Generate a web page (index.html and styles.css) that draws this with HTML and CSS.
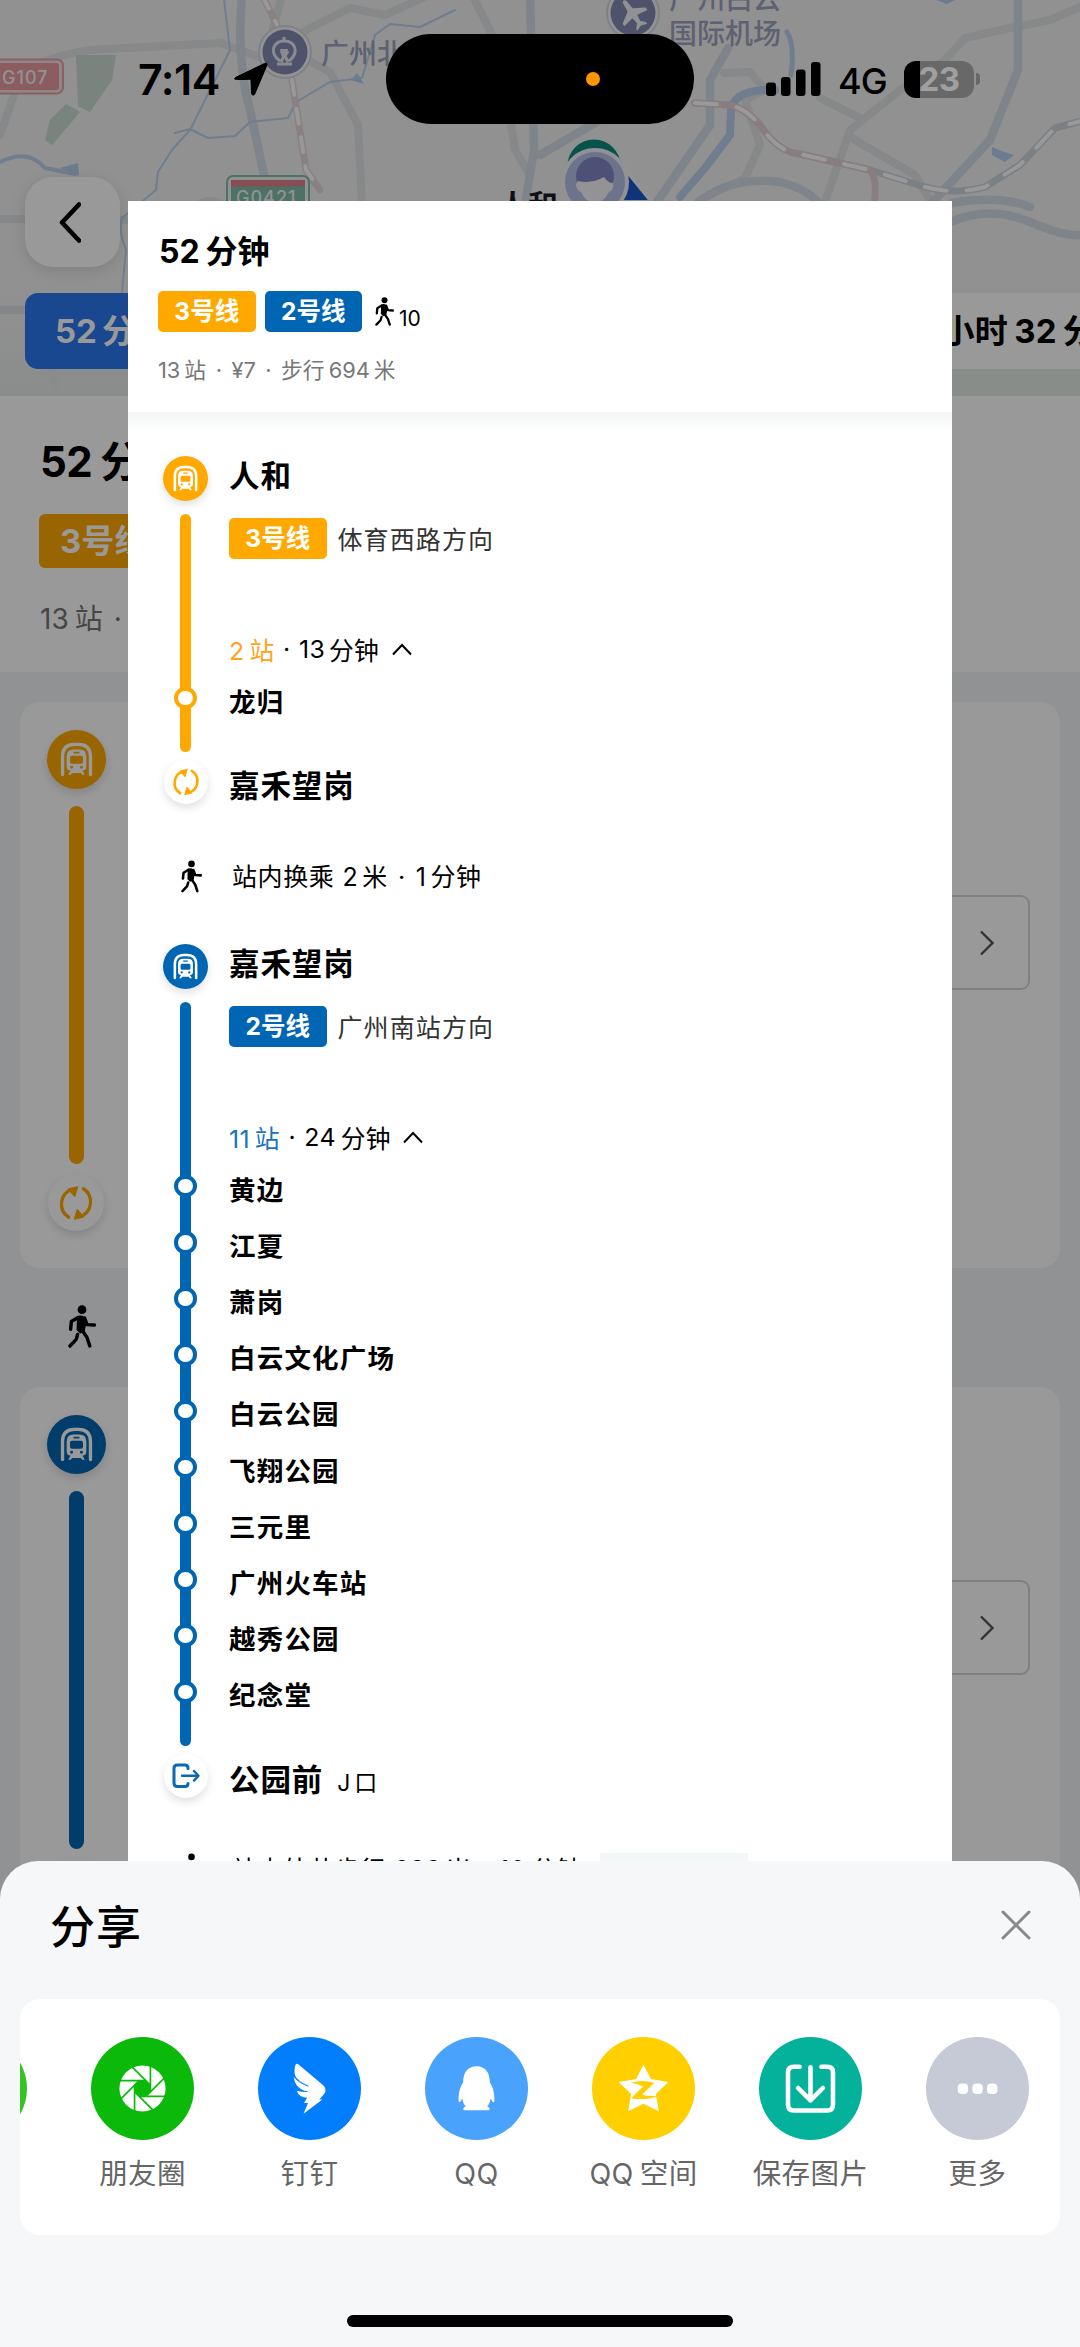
FILE: index.html
```html
<!DOCTYPE html>
<html lang="zh-CN">
<head>
<meta charset="utf-8">
<title>分享路线</title>
<link rel="stylesheet" href="styles.css">
</head>
<body>
<svg class="defs" aria-hidden="true">
  <symbol id="metro" viewBox="0 0 60 60">
    <path d="M15.8 45.3V27Q15.8 14.6 28 14.6H32Q44.2 14.6 44.2 27V45.3" fill="none" stroke="#fff" stroke-width="3.4" stroke-linecap="round"/>
    <path fill="#fff" fill-rule="evenodd" d="M27 19.8H33Q40 19.8 40 27V37Q40 41.2 36 41.2L38.4 45.6H35.6L34.6 43.8H25.4L24.4 45.6H21.6L24 41.2Q20 41.2 20 37V27Q20 19.8 27 19.8ZM27 22V23.8H33V22ZM25.4 26.2Q23.4 26.2 23.4 28.2V32.4Q23.4 34.4 25.4 34.4H34.6Q36.6 34.4 36.6 32.4V28.2Q36.6 26.2 34.6 26.2ZM25 36.4A1.5 1.5 0 1 0 25 39.4A1.5 1.5 0 1 0 25 36.4ZM35 36.4A1.5 1.5 0 1 0 35 39.4A1.5 1.5 0 1 0 35 36.4Z"/>
  </symbol>
  <symbol id="swap" viewBox="-22 -22 44 44">
    <g id="swap-half"><path d="M-5.8 11.2A12.3 12.3 0 0 1 -3 -10.8" fill="none" stroke="#ffa800" stroke-width="2.6" stroke-linecap="round"/><path d="M1.2-12.6L-6-11L-1-5.2Z" fill="#ffa800" stroke="#ffa800" stroke-linejoin="round"/></g>
    <use href="#swap-half" transform="rotate(180)"/>
  </symbol>
  <symbol id="walk" viewBox="0 0 28 43">
    <circle cx="14" cy="4.7" r="4.4"/>
    <path d="M9 11.2Q13 9.6 17 12L18 20L16.6 27L12 28.5L8.6 25Z"/>
    <g fill="none" stroke="#000" stroke-width="3.4" stroke-linecap="round" stroke-linejoin="round">
      <path d="M10 12.5L3.4 16.5L2.6 24.2"/><path d="M16.6 13L19 19.6L26.4 20"/><path d="M14.6 26L19 32.5L21.8 41"/><path d="M9.6 29.5L8.2 34.4L2 41"/>
    </g>
  </symbol>
  <symbol id="caret" viewBox="0 0 20 13"><path d="M1 11.5L10 2L19 11.5" fill="none" stroke="#000" stroke-width="2"/></symbol>
</svg>

<div class="screen">
  <div class="page">
    <div class="map">
      <svg class="map-art" width="1080" height="396" viewBox="0 0 1080 396">
        <defs><linearGradient id="fade" x1="0" y1="0" x2="0" y2="1"><stop offset="0" stop-color="#eeefef" stop-opacity="0"/><stop offset="1" stop-color="#e7e9ea"/></linearGradient></defs>
        <rect width="1080" height="396" fill="#f2f2f2"/>
        <g fill="none" stroke-linejoin="round" stroke-linecap="round">
          <g stroke="#dfe3e4" stroke-width="8">
            <path d="M-5 95Q30 58 90 50L220 43L262 58L310 28L350 8L385 15L440-10"/>
            <path d="M14 95L0 135"/><path d="M282-5L270 40L330 72L358 125L362 205"/><path d="M0 219L125 220" /><path d="M472-5L500 50L515 150L530 175"/>
            <path d="M724 73L750 72L765 90L745 100L760 145L745 178L700 200L670 235"/>
            <path d="M825 202L850 130L900 90L945 60L965 38L1010 28L1050 20L1085 5"/>
            <path d="M820 98L860 118M850 137L915 175L930 200"/><path d="M190 215Q205 190 230 210"/>
          </g>
          <g stroke="#d3dce4" stroke-width="8.500">
            <path d="M242-5Q236 60 250 110L265 180"/><path d="M728 48L710 80L710 125L655 205"/><path d="M530-5L534 150L525 205"/>
            <path d="M1018-5L1018 70L990 140L930 205M695 205Q730 175 780 182Q810 190 820 205"/><path d="M950 222Q990 205 1030 222T1085 234" /><path d="M952 203Q1000 195 1030 207"/><path d="M0 310H25M50 365L60 396M540 155L600 120"/>
          </g>
          <g stroke="#bad1ee">
            <path stroke-width="4" d="M0 162Q28 148 45 168L75 174"/><path stroke-width="2" d="M224 0L230 50L190 130L172 150L158 172L156 190L144 200L122 218Q118 230 126 250L122 292M175 133L190 129L208 138L235 136L250 122L288 118L296 102L330 82L362 78L375 35L390 24L420 27L455 10"/>
            <path stroke-width="8" d="M775 90Q735 88 731 110L730 135L705 168L680 197"/><path stroke-width="5" d="M787 32Q795 45 791 75"/>
          </g>
          <path d="M262-5L277 25M292 80L306 170L320 190" stroke="#e4d6d9" stroke-width="7"/><path d="M262-5L277 25M292 80L306 170L320 190" stroke="#fff" stroke-width="4" stroke-dasharray="15 14"/>
          <path d="M695 103L730 105Q750 110 765 132Q780 152 800 154L870 170L925 187Q955 195 985 187L1020 165L1055 128L1085 120" stroke="#ccd5dd" stroke-width="7"/>
          <path d="M695 103L730 105Q750 110 765 132Q780 152 800 154L870 170Q878 180 874 205" stroke="#e5d2d4" stroke-width="7"/>
          <path d="M695 103L730 105Q750 110 765 132Q780 152 800 154L870 170L925 187Q955 195 985 187L1020 165L1055 128L1085 120" stroke="#fff" stroke-width="4" stroke-dasharray="22 20"/>
        </g>
        <path d="M76 55L116 55L112 80L90 112L78 106Z M66 104L80 112L58 138L52 145L45 140L50 120Z" fill="#c9dcd1"/>
        <path d="M60 168L78 163L79 176Z M357 73L364 84L350 80Z M992 147L1004 152L1014 155L1005 162L992 155Z M936 0H955L947 4Z" fill="#b2cdf0"/>
        <rect x="0" y="270" width="1080" height="126" fill="url(#fade)"/><rect x="952" y="360" width="128" height="36" fill="#e3ebe6"/>
        <rect x="-10" y="59.500" width="73" height="34" rx="6" fill="#f2dfe0" stroke="#e5a2a8" stroke-width="2"/><rect x="-10" y="63" width="69" height="27" rx="3" fill="#e89aa1"/>
        <text class="road" x="2" y="84" font-size="18">G107</text>
        <rect x="227" y="176" width="82" height="40" rx="6" fill="#eef3f1" stroke="#7fbdaa" stroke-width="2"/><rect x="231" y="180" width="74" height="34" fill="#7fbdaa"/><rect x="231" y="180" width="74" height="6.500" fill="#df8289"/>
        <text class="road" x="236" y="204" font-size="18">G0421</text>
        <circle cx="285" cy="52" r="26" fill="#f5f5f5" stroke="#d5d8de" stroke-width="2"/><circle cx="285" cy="52" r="22.500" fill="#828bb3"/>
        <path d="M280 61C268 52 274 41 284 41C295 41 300 52 289 61M284 37V41M277 64H292M281 51L284 56L281 62M288 51L285 56L288 62" fill="none" stroke="#e6e8f2" stroke-width="3"/><path d="M280 49H288L286 57H282Z" fill="#e6e8f2"/>
        <circle cx="633" cy="13" r="26" fill="#f5f5f5" stroke="#d5d8de" stroke-width="2"/><circle cx="633" cy="13" r="22.500" fill="#828bb3"/>
        <path transform="translate(633 14) rotate(-35)" d="M-2-15Q0-18 2-15L3-5L14 2V5L3 3L2 10L6 14V16L0 14L-6 16V14L-2 10L-3 3L-14 5V2L-3-5Z" fill="#f2f3f8"/>
        <text class="place" x="321" y="64" font-size="28">广州北</text>
        <text class="place" x="669" y="9" font-size="28">广州白云</text><text class="place" x="669" y="44" font-size="28">国际机场</text>
        <text class="stop-label" x="498" y="216" font-size="30">人和</text>
        <path d="M622 165L652 202H600Z" fill="#1c57c8" stroke="#f2f4fa" stroke-width="4"/>
        <circle cx="594" cy="166" r="28" fill="#0d897d" stroke="#e8f4f0" stroke-width="3"/>
        <circle cx="595" cy="182" r="32" fill="#b6c0e6" stroke="#f2f4fa" stroke-width="4"/><circle cx="595" cy="176" r="19" fill="#8088c4"/>
        <path d="M578 181Q592 184 604 177Q608 183 613 183Q614 190 609 192Q603 203 595 203Q586 203 581 192Q576 190 576 184Z" fill="#f5f6fb"/>
      </svg>
      <div class="back"><svg width="22" height="41" viewBox="0 0 22 41"><path d="M20 2.500L3 20.500L20 38.500" fill="none" stroke="#000" stroke-width="4.600" stroke-linecap="round" stroke-linejoin="round"/></svg></div>
      <div class="chips"><div class="chip active">52<span class="g5">分钟</span></div><div class="chip other">1小时<span class="g6">32</span><span class="g6">分钟</span></div></div>
    </div>
    <div class="summary">
      <div class="summary-title">52<span class="g8">分钟</span></div>
      <div class="summary-tag">3号线</div>
      <div class="summary-info">13<span class="g6">站</span><span class="dot">·</span></div>
    </div>
    <div class="card leg-card">
      <div class="bg-rail"><div class="bg-badge orange"><svg><use href="#metro"/></svg></div><div class="bg-line orange"></div><div class="bg-badge plain"><svg><use href="#swap"/></svg></div></div>
      <div class="go"><svg width="14" height="26" viewBox="0 0 14 26"><path d="M1 1.500L12.500 13L1 24.500" fill="none" stroke="#585858" stroke-width="2.400"/></svg></div>
    </div>
    <div class="bg-walk"><svg width="28" height="43"><use href="#walk"/></svg></div>
    <div class="card leg-card">
      <div class="bg-rail"><div class="bg-badge blue"><svg><use href="#metro"/></svg></div><div class="bg-line blue long"></div><div class="bg-badge plain"></div></div>
      <div class="go"><svg width="14" height="26" viewBox="0 0 14 26"><path d="M1 1.500L12.500 13L1 24.500" fill="none" stroke="#585858" stroke-width="2.400"/></svg></div>
    </div>
  </div>

  <div class="scrim"></div>

  <div class="status">
    <div class="clock">7:14</div>
    <svg class="loc" width="34" height="34" viewBox="0 0 34 34"><path d="M1.500 15.500L31.500 1Q33.500 .5 33 3L20.500 32.500Q18.500 34.500 17.500 31.500L17 18.500Q16.800 17.500 15.500 17.300L2.500 17.500Q-1 17.300 1.500 15.500Z" stroke="#000" stroke-linejoin="round"/></svg>
    <div class="island"><i></i></div>
    <svg class="signal" width="55" height="34" viewBox="0 0 55 34"><rect y="20.500" width="10" height="13.500" rx="3"/><rect x="15" y="15" width="9.500" height="19" rx="3"/><rect x="30" y="7.500" width="9.500" height="26.500" rx="3"/><rect x="45" width="9.500" height="34" rx="3"/></svg>
    <div class="net">4G</div>
    <div class="battery"><span>23</span></div><div class="nub"></div>
  </div>

  <div class="poster">
    <div class="head">
      <div class="head-title">52<span class="g6">分钟</span></div>
      <div class="tags"><span class="tag orange">3号线</span><span class="tag blue">2号线</span><svg class="walk-mini" width="19" height="29"><use href="#walk"/></svg><span class="walk-min">10</span></div>
      <div class="head-info">13<span class="g4">站</span><span class="dot">·</span>¥7<span class="dot">·</span>步行<span class="g4">694</span><span class="g4">米</span></div>
    </div>
    <div class="legs">
      <div class="leg">
        <div class="rail"><div class="badge orange"><svg><use href="#metro"/></svg></div><div class="line orange"><i></i></div><div class="badge plain"><svg><use href="#swap"/></svg></div></div>
        <div class="detail">
          <div class="station">人和</div>
          <div class="toward"><span class="tag orange">3号线</span><span class="dir">体育西路方向</span></div>
          <div class="stat"><b class="c-orange">2<span class="g5">站</span></b><em>·</em>13<span class="g4">分钟</span><svg width="20" height="13"><use href="#caret"/></svg></div>
          <div class="stops"><div>龙归</div></div>
          <div class="station">嘉禾望岗</div>
        </div>
      </div>
      <div class="walk"><svg width="21" height="33"><use href="#walk"/></svg><div>站内换乘<span class="g9">2</span><span class="g4">米</span><em>·</em>1<span class="g4">分钟</span></div></div>
      <div class="leg">
        <div class="rail"><div class="badge blue"><svg><use href="#metro"/></svg></div><div class="line blue long"><i></i><i></i><i></i><i></i><i></i><i></i><i></i><i></i><i></i><i></i></div><div class="badge plain"><svg viewBox="-22 -22 44 44"><g fill="none" stroke="#0a68b4" stroke-width="3" stroke-linecap="round" stroke-linejoin="round"><path d="M2-7.500V-8Q2-11-1-11H-8.500Q-12-11-12-8V7Q-12 10.500-8.500 10.500H-1Q2 10.500 2 7.500"/><path d="M-4-.2H12M8-5L12.500-.2L8 4.600" stroke-width="2.400"/></g></svg></div></div>
        <div class="detail">
          <div class="station">嘉禾望岗</div>
          <div class="toward"><span class="tag blue">2号线</span><span class="dir">广州南站方向</span></div>
          <div class="stat"><b class="c-blue">11<span class="g5">站</span></b><em>·</em>24<span class="g5">分钟</span><svg width="20" height="13"><use href="#caret"/></svg></div>
          <div class="stops"><div>黄边</div><div>江夏</div><div>萧岗</div><div>白云文化广场</div><div>白云公园</div><div>飞翔公园</div><div>三元里</div><div>广州火车站</div><div>越秀公园</div><div>纪念堂</div></div>
          <div class="station">公园前<span class="exit">J<span>口</span></span></div>
        </div>
      </div>
      <div class="walk last"><svg width="21" height="33"><use href="#walk"/></svg><div>站内外共步行<span class="g9">692</span><span class="g4">米</span><em>·</em>10<span class="g5">分钟</span></div><div class="hint">预计提前到达</div></div>
    </div>
  </div>

  <div class="sheet">
    <div class="sheet-head"><h1>分享</h1><svg width="30" height="30" viewBox="0 0 30 30"><path d="M2 2L28 28M28 2L2 28" stroke="#87888a" stroke-width="3" stroke-linecap="round"/></svg></div>
    <div class="apps">
      <div class="app"><div class="ico wechat"></div></div>
      <div class="app"><div class="ico moments"><svg viewBox="-52 -52 104 104"><circle r="23.300" fill="#fff"/><path fill="#0bb90a" d="M-3.200-7.700H3.200L7.700-3.200V3.200L3.200 7.700H-3.200L-7.700 3.200V-3.200Z"/><g stroke="#0bb90a" stroke-width="1.700"><path id="bl" d="M8-24V3.500"/><use href="#bl" transform="rotate(45)"/><use href="#bl" transform="rotate(90)"/><use href="#bl" transform="rotate(135)"/><use href="#bl" transform="rotate(180)"/><use href="#bl" transform="rotate(225)"/><use href="#bl" transform="rotate(270)"/><use href="#bl" transform="rotate(315)"/></g></svg></div><span>朋友圈</span></div>
      <div class="app"><div class="ico ding"><svg viewBox="-52 -52 104 104"><path fill="#fff" d="M-13.500-25Q-11.500-25-9-22.500L13.500-3.500Q17.500 0 15.500 4.500L10 11H13L-6 25.500L-1.500 14.700H-5.500L-2.500 9.300Q-10.500 9-12.800 2.200L-4 3Q-15-1-16-11.500Q-9-3.500-1-2.500Q-14-7-15-15Q-15.500-22-13.500-25Z"/><path d="M-15-11.800Q-9-5-1-2.200M-13 1.600Q-7 3.600-2 3" fill="none" stroke="#027efc"/></svg></div><span>钉钉</span></div>
      <div class="app"><div class="ico qq"><svg viewBox="-52 -52 104 104"><path fill="#fff" d="M0-22.500C9-22.500 13.500-16 13.500-6C17-1 18.500 6 18 13.500C17 15 15.500 12 14.200 10C14 13.500 12.500 16.500 10.500 18.300C14 19 14 22 12 22H-12C-14 22-14 19-10.500 18.300C-12.500 16.500-14 13.500-14.200 10C-15.500 12-17 15-18 13.500C-18.500 6-17-1-13.500-6C-13.500-16-9-22.500 0-22.500Z"/></svg></div><span>QQ</span></div>
      <div class="app"><div class="ico qzone"><svg viewBox="-52 -52 104 104"><path fill="#fff" d="M0-24L7.500-9.500L25-6.500L12.500 5.500L15.500 23L0 15.500L-15.500 23L-12.500 5.500L-25-6.500L-7.500-9.500Z"/><path fill="#ffcf00" d="M-13-6Q0-9.500 11-5.500L-1.500 6Q6 8.500 15 7.200Q3 12.500-12.500 9.800L-.5-2Q-7-5-13-6Z"/></svg></div><span>QQ<span class="g7">空间</span></span></div>
      <div class="app"><div class="ico save"><svg viewBox="-52 -52 104 104"><g fill="none" stroke="#fff" stroke-width="4.600" stroke-linecap="round" stroke-linejoin="round"><path d="M-11-22H-17Q-22.700-22-22.700-16.500V16.500Q-22.700 22.200-17 22.200H17Q22.700 22.200 22.700 16.500V-16.500Q22.700-22 17-22H11M0-21.500V12M-12.500-.5L0 12L12.500-.5"/></g></svg></div><span>保存图片</span></div>
      <div class="app"><div class="ico more"><svg viewBox="-52 -52 104 104" fill="#fff"><rect x="-20" y="-5" width="10.500" height="10.500" rx="4"/><rect x="-5.200" y="-5" width="10.500" height="10.500" rx="4"/><rect x="9.600" y="-5" width="10.500" height="10.500" rx="4"/></svg></div><span>更多</span></div>
    </div>
    <div class="home"></div>
  </div>
</div>
</body>
</html>
```
FILE: styles.css
```css
* { box-sizing: border-box; }
body { margin: 0; font-family: Inter, "Noto Sans CJK SC", sans-serif; color: #000; }
i, em, b { font-style: normal; font-weight: inherit; }
svg { display: block; flex: none; }
.defs { position: absolute; width: 0; height: 0; }
.screen { position: relative; width: 1080px; height: 2347px; overflow: hidden; background: #f1f3f5; white-space: nowrap; }
.orange { background: #ffa800; }
.blue { background: #0066b3; }
.g4 { margin-left: 4px; } .g5 { margin-left: 5px; } .g6 { margin-left: 6px; } .g7 { margin-left: 6px; } .g8 { margin-left: 8px; } .g9 { margin-left: 8px; }

/* page behind the scrim */
.map { position: relative; height: 396px; padding: 177px 0 0 25px; overflow: hidden; }
.map-art { position: absolute; left: 0; top: 0; }
.map-art text { font-family: Inter, "Noto Sans CJK SC", sans-serif; }
.road { fill: #f3f3f3; font-weight: 500; letter-spacing: 1px; }
.place { fill: #9ba2bd; font-weight: 500; }
.stop-label { fill: #1a1c24; font-weight: 700; }
.back { position: relative; width: 95px; height: 90px; border-radius: 28px; background: #fff; box-shadow: 0 4px 16px rgba(0,0,0,.12); display: flex; align-items: center; justify-content: center; padding-right: 5px; }
.chips { position: relative; display: flex; justify-content: space-between; margin-top: 26px; width: 1190px; }
.chip { height: 76px; line-height: 76px; border-radius: 13px; font-size: 33px; font-weight: 700; }
.chip.active { width: 210px; padding-left: 30px; background: #2b78f0; color: #fff; }
.chip.other { width: 320px; padding-left: 32px; background: #fff; letter-spacing: .3px; }
.summary { height: 276px; background: #fff; padding: 36px 0 0 40px; }
.summary-title { font-size: 42px; font-weight: 700; line-height: 60px; letter-spacing: -.5px; }
.summary-tag { width: 130px; height: 54px; margin: 22px 0 0 -1px; padding-left: 21px; border-radius: 6px; background: #ffa800; color: #fff; font-size: 33px; line-height: 54px; font-weight: 700; }
.summary-info { margin-top: 31px; font-size: 28px; line-height: 40px; color: #767676; }
.summary-info .dot { margin-left: 11px; }
.card { margin: 30px 20px 0; height: 566px; border-radius: 20px; background: #fff; display: flex; justify-content: space-between; }
.bg-rail { width: 60px; margin: 28px 0 0 26px; display: flex; flex-direction: column; align-items: center; }
.bg-badge { width: 59px; height: 59px; flex: none; border-radius: 50%; box-shadow: 0 4px 10px rgba(0,0,0,.14); }
.bg-badge svg { width: 100%; height: 100%; }
.bg-badge.plain { width: 56px; height: 56px; background: #fff; }
.bg-line { width: 15px; height: 358px; flex: none; margin: 17px 0 11px; border-radius: 8px; }
.go { width: 110px; height: 95px; margin: 193px 30px 0 0; border: 2px solid #d3d5d8; border-radius: 9px; display: flex; align-items: center; justify-content: flex-end; padding-right: 34px; }
.bg-walk { height: 89px; padding: 37px 0 0 68px; }
.scrim { position: absolute; inset: 0; background: rgba(0,0,0,.4); }

/* status bar */
.status { position: absolute; inset: 0 0 auto; height: 124px; padding: 34px 0 0 138px; display: flex; align-items: center; }
.clock { width: 88px; font-size: 43px; font-weight: 600; letter-spacing: -.5px; }
.loc { margin-left: 8px; }
.island { width: 308px; height: 90px; margin-left: 118px; border-radius: 45px; background: #000; display: flex; align-items: center; padding-left: 200px; }
.island i { width: 14px; height: 14px; border-radius: 50%; background: #ff9500; }
.signal { margin-left: 72px; }
.net { width: 48px; margin: 3px 0 0 17px; font-size: 36px; font-weight: 500; letter-spacing: -1px; }
.battery { width: 70px; height: 37px; margin-left: 18px; border-radius: 12px; background: linear-gradient(90deg, #000 16px, #686868 16px); color: #a0a0a0; font-size: 33px; line-height: 37px; font-weight: 700; text-align: center; letter-spacing: -.5px; }
.nub { width: 4px; height: 12px; margin-left: 2px; border-radius: 0 5px 5px 0; background: #686868; }

/* route poster */
.poster { position: absolute; left: 128px; top: 201px; width: 824px; height: 1700px; background: #fff; overflow: hidden; }
.head { height: 211px; padding: 25px 30px 0; }
.head-title { font-size: 32px; font-weight: 700; line-height: 51px; padding-left: 1px; }
.tags { display: flex; margin-top: 14px; height: 41px; align-items: center; }
.tag { width: 97.500px; height: 41px; border-radius: 5px; color: #fff; font-size: 24.500px; font-weight: 700; line-height: 41px; text-align: center; }
.tags .tag + .tag { margin-left: 9px; }
.walk-mini { margin-left: 13px; }
.walk-min { margin: 14px 0 0 5px; font-size: 21px; line-height: 24px; }
.head-info { margin-top: 23px; font-size: 21.800px; line-height: 30px; color: #777; }
.head-info .dot { margin: 0 9.500px; }
.legs { height: 1489px; padding: 44px 35px 0; background: linear-gradient(#f3f5f6, #fff 20px); }
.leg { display: flex; gap: 21px; }
.rail { width: 45px; display: flex; flex-direction: column; align-items: center; }
.badge { width: 45px; height: 45px; flex: none; border-radius: 50%; box-shadow: 0 4px 9px rgba(0,0,0,.12); }
.badge svg { width: 100%; height: 100%; }
.badge.plain { width: 44px; height: 44px; background: #fff; }
.line { width: 11.500px; height: 238px; margin: 13px 0 8px; padding-top: 172.700px; border-radius: 6px; display: flex; flex-direction: column; align-items: center; gap: 33.700px; }
.line.long { height: 743.500px; }
.line i { width: 22.500px; height: 22.500px; flex: none; border: 4px solid #ffa800; border-radius: 50%; background: #fff; }
.line.blue i { border-color: #0066b3; }
.station { height: 40px; line-height: 39px; font-size: 30.500px; font-weight: 700; letter-spacing: .9px; }
.toward { display: flex; gap: 11px; height: 41px; margin: 22px 0 70px; align-items: center; font-size: 25px; letter-spacing: 1.100px; color: #333; }
.toward .tag { letter-spacing: 0; }
.dir { margin-top: -2px; }
.stat { display: flex; align-items: center; height: 40px; margin-bottom: 4.500px; font-size: 24.800px; letter-spacing: .3px; }
.stat em { margin: 0 8.500px; }
.stat svg { margin-left: 12.500px; }
.c-orange { color: #ffa31a; } .c-blue { color: #1874bd; }
.stops { margin: 0 0 36px; font-size: 26.500px; font-weight: 700; letter-spacing: 1.200px; }
.stops div { height: 56.200px; line-height: 56.200px; }
.exit { margin-left: 14px; font-size: 23px; font-weight: 400; }
.exit span { margin-left: 3px; }
.walk { display: flex; align-items: center; height: 40px; margin: 51px 0 47.500px; padding-left: 18px; font-size: 25px; letter-spacing: .6px; line-height: 40px; }
.walk div { margin-left: 30px; }
.walk.last { height: 38px; }
.walk em { margin: 0 10px; }
.walk .hint { width: 148px; height: 34px; margin-left: 18px; padding-top: 3px; background: #f1f8f6; color: #8fc9b9; font-size: 18px; line-height: 31px; text-align: center; }

/* share sheet */
.sheet { position: absolute; left: 0; top: 1861px; width: 1080px; height: 486px; border-radius: 38px 38px 0 0; background: #f5f7f8; }
.sheet-head { height: 138px; padding: 34px 49px 0 50px; display: flex; justify-content: space-between; }
.sheet-head h1 { margin: 0; font-size: 45px; line-height: 65px; font-weight: 500; letter-spacing: 1px; }
.sheet-head svg { margin-top: 15px; }
.apps { height: 236px; margin: 0 20px; padding-top: 38px; border-radius: 20px; background: #fff; overflow: hidden; display: flex; }
.app { width: 167px; flex: none; display: flex; flex-direction: column; align-items: center; font-size: 28.500px; line-height: 40px; letter-spacing: .4px; color: #666; }
.app:first-child { margin-left: -128px; }
.ico { width: 103px; height: 103px; margin-bottom: 14px; border-radius: 50%; }
.ico svg { width: 103px; height: 103px; }
.wechat { background: #34c322; } .moments { background: #0bb90a; } .ding { background: #027efc; } .qq { background: #49a2fb; } .qzone { background: #ffcf00; } .save { background: #04b19b; } .more { background: #c6cad7; }
.home { width: 386px; height: 12px; margin: 80px auto 0; border-radius: 6px; background: #000; }
```
